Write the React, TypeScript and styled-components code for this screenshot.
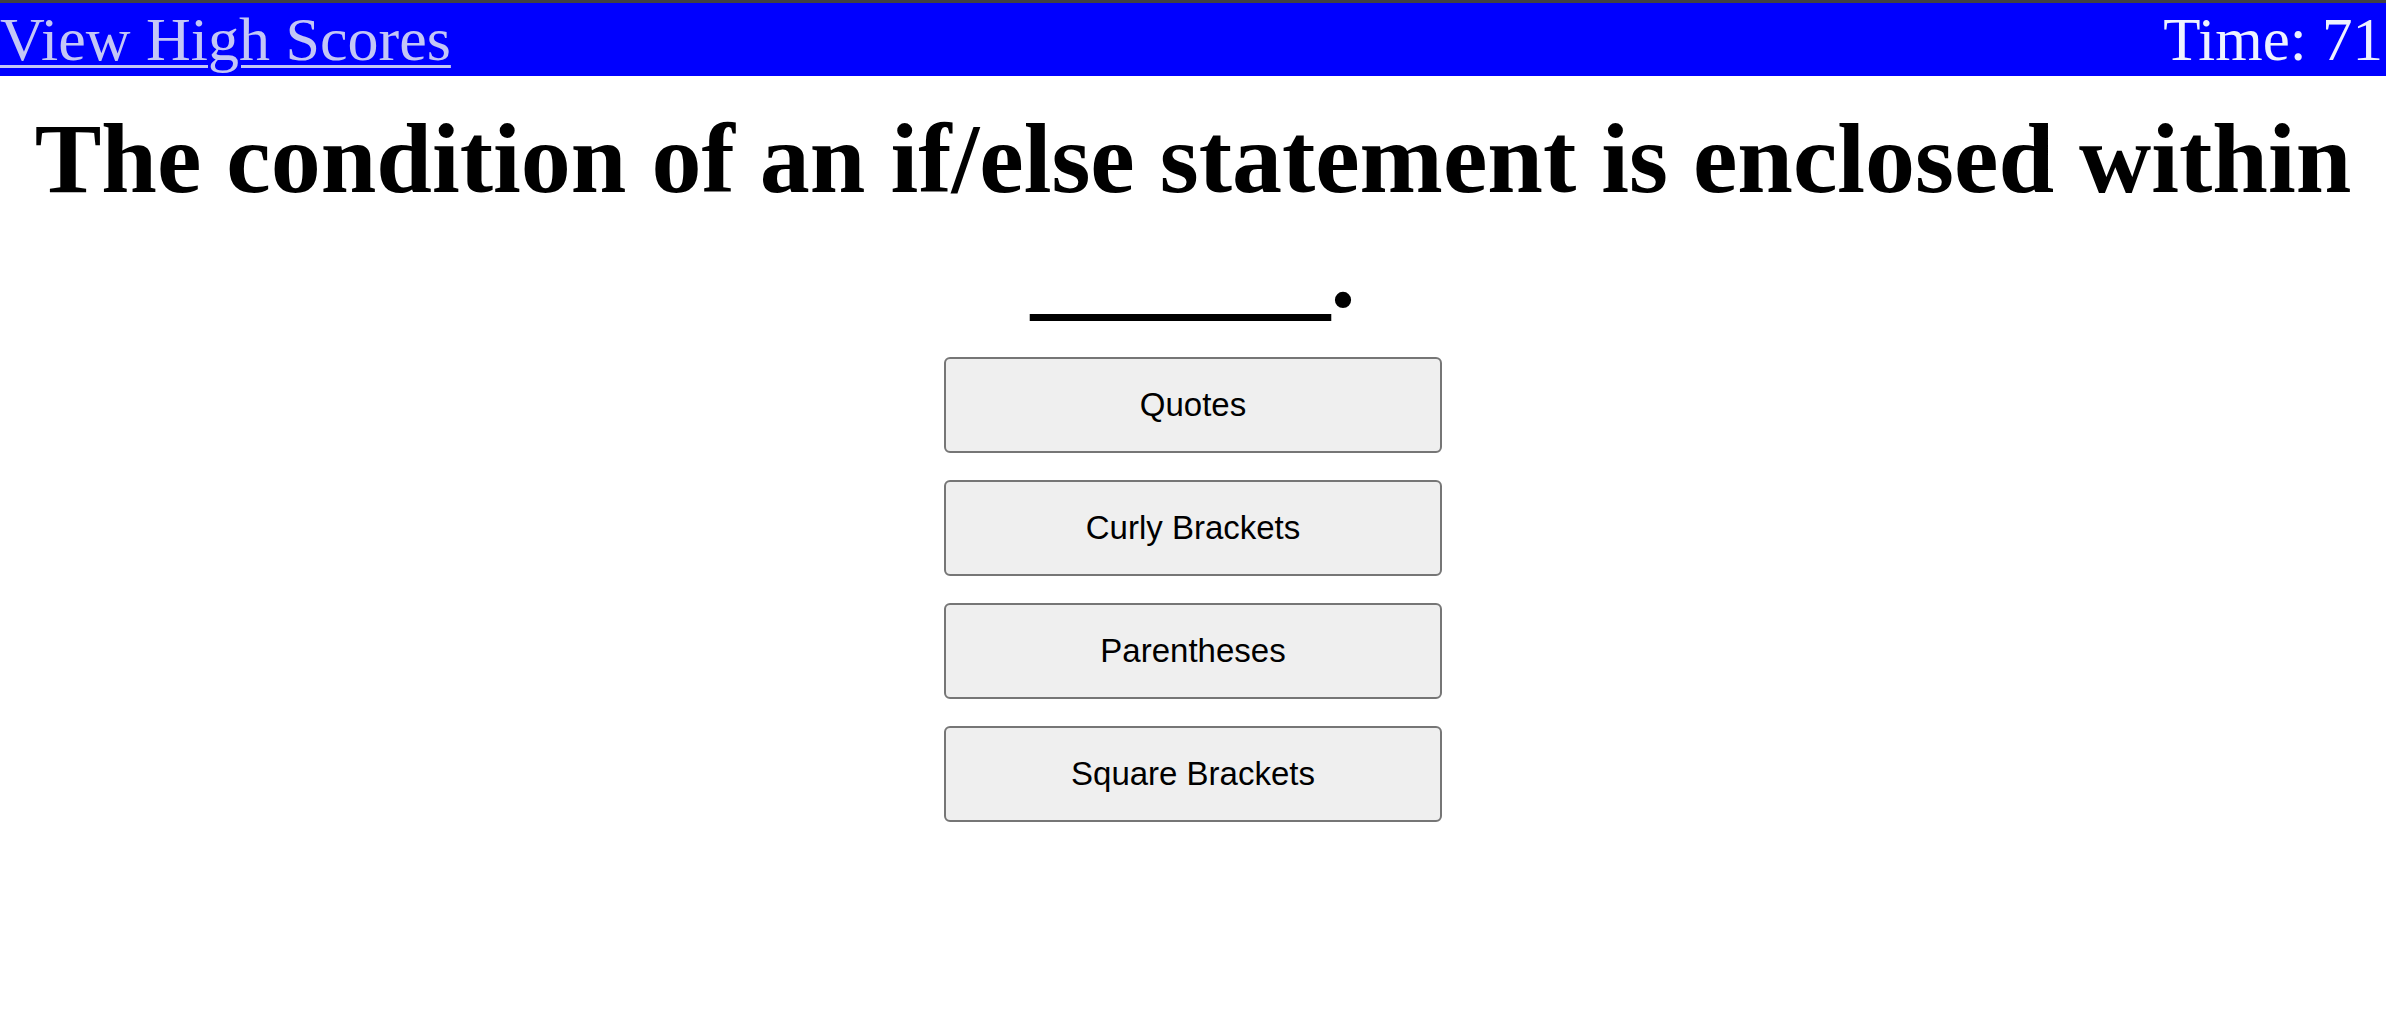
import React from "react";
import styled, { createGlobalStyle } from "styled-components";

const Global = createGlobalStyle`
  html, body { margin: 0; padding: 0; background: #ffffff; }
  body { font-family: "Liberation Serif", "Times New Roman", serif; }
`;

const Header = styled.header`
  display: flex;
  justify-content: space-between;
  align-items: flex-start;
  height: 72px;
  padding-top: 1px;
  box-sizing: content-box;
  background: #0000ff;
  border-top: 3px solid #414141;
  font-family: "Liberation Serif", "Times New Roman", serif;
  font-size: 62px;
  line-height: 71px;
`;

const ScoresLink = styled.a`
  color: #c3c6f6;
  text-decoration: underline;
  text-decoration-thickness: 3px;
  text-underline-offset: 5px;
  white-space: nowrap;
`;

const Timer = styled.span`
  color: #eef2ff;
  font-size: 61px;
  padding-right: 3px;
  white-space: nowrap;
`;

const Main = styled.main`
  display: flex;
  flex-direction: column;
  align-items: center;
`;

const Question = styled.h1`
  margin: 25px 0 26px;
  font-family: "Liberation Serif", "Times New Roman", serif;
  font-weight: bold;
  font-size: 100px;
  line-height: 115px;
  text-align: center;
  color: #000;
`;

const Choices = styled.div`
  display: flex;
  flex-direction: column;
  gap: 27px;
`;

const Choice = styled.button`
  width: 498px;
  height: 96px;
  background: #efefef;
  border: 2px solid #767676;
  border-radius: 6px;
  font-family: "Liberation Sans", Arial, sans-serif;
  font-size: 33px;
  color: #000;
  cursor: pointer;
`;

const choices = ["Quotes", "Curly Brackets", "Parentheses", "Square Brackets"];

export default function App() {
  return (
    <>
      <Global />
      <Header>
        <ScoresLink href="#">View High Scores</ScoresLink>
        <Timer>Time: 71</Timer>
      </Header>
      <Main>
        <Question>
          The condition of an if/else statement is enclosed within ______.
        </Question>
        <Choices>
          {choices.map((c) => (
            <Choice key={c}>{c}</Choice>
          ))}
        </Choices>
      </Main>
    </>
  );
}
